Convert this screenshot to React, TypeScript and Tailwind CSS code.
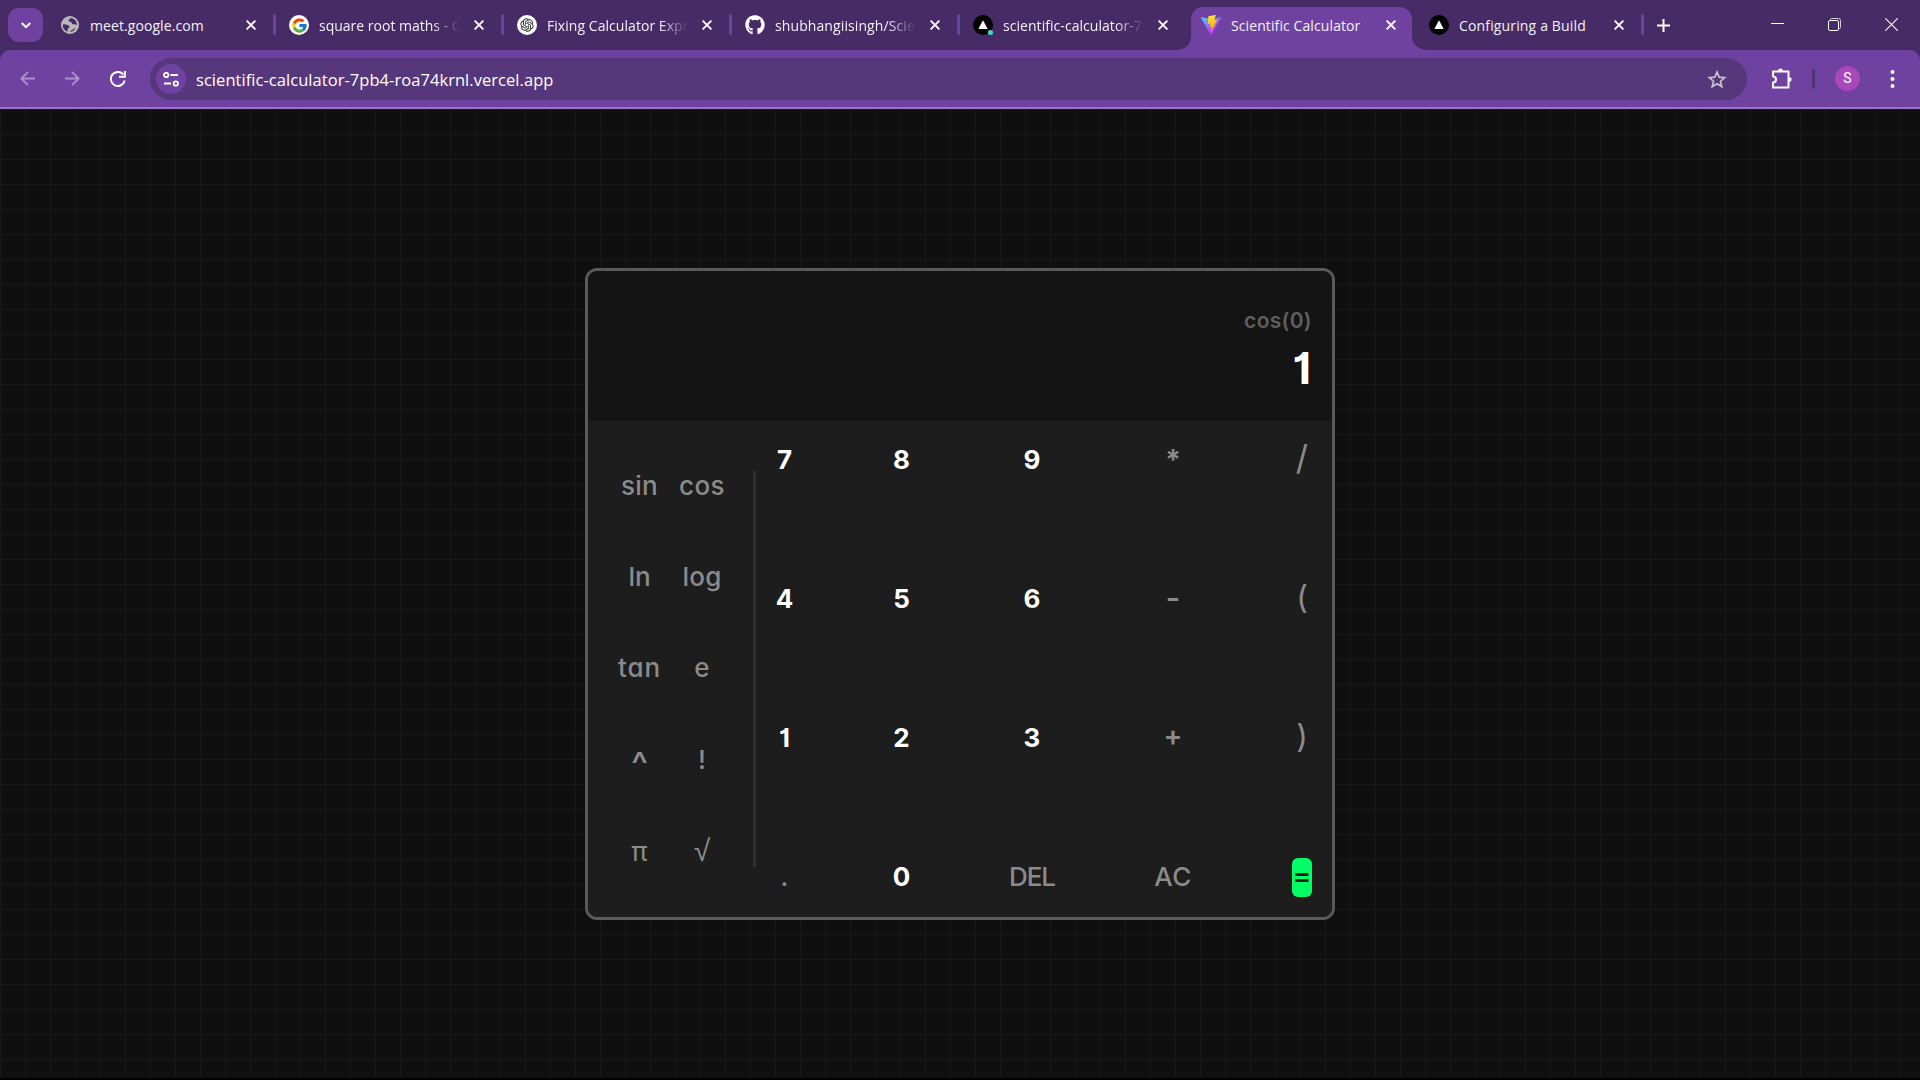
import React from "react";
import { FcGoogle } from "react-icons/fc";
import { RiOpenaiFill } from "react-icons/ri";
import { FaGithub } from "react-icons/fa";

const GlobeMark = () => (
  <svg width="18" height="18" viewBox="0 0 18 18">
    <circle cx="9" cy="9" r="9" fill="#b9b9b9" />
    <path
      d="M10.500 1.900C8.800 2.600 7.300 3.200 7.600 4.800c.3 1.300 3 .7 3.200 2.300.2 1.500 1.600 1.300 2.600 1.100 1-.2 1.900.4 2.500 1.300A7.100 7.100 0 0 0 10.500 1.900ZM2 8.200c1.500.1 3.600.2 5.200 1 1.600.8 1.500 2.300.4 2.900-1.300.7-.9 2.400-1 3.600A7.100 7.100 0 0 1 2 8.200ZM9 15.900c.2-1.500 1.800-1.300 2.600-2.200.7-.8 1.200-1.500 2.900-1.100A7 7 0 0 1 9 15.900Z"
      fill="#462b66"
    />
  </svg>
);

const GoogleMark = () => (
  <span className="flex size-5 items-center justify-center rounded-full bg-white">
    <FcGoogle size={17} />
  </span>
);

const OpenAiMark = () => (
  <span className="flex size-5 items-center justify-center rounded-full bg-white text-[#222]">
    <RiOpenaiFill size={16} />
  </span>
);

const VercelMark = ({ dot = false }: { dot?: boolean }) => (
  <svg width="20" height="20" viewBox="0 0 20 20">
    <circle cx="10" cy="10" r="10" fill="#000" />
    <path d="M10 5.2 14.7 14H5.3Z" fill="#fff" />
    {dot && <circle cx="17.5" cy="17.500" r="2.500" fill="#45dec4" />}
  </svg>
);

const ViteMark = () => (
  <svg width="20" height="20" viewBox="0 0 256 257">
    <defs>
      <linearGradient id="va" x1="-.828%" x2="57.636%" y1="7.652%" y2="78.411%">
        <stop offset="0%" stopColor="#41D1FF" />
        <stop offset="100%" stopColor="#BD34FE" />
      </linearGradient>
      <linearGradient id="vb" x1="43.376%" x2="50.316%" y1="2.242%" y2="89.03%">
        <stop offset="0%" stopColor="#FFEA83" />
        <stop offset="8.333%" stopColor="#FFDD35" />
        <stop offset="100%" stopColor="#FFA800" />
      </linearGradient>
    </defs>
    <path fill="url(#va)" d="M255.153 37.938 134.897 252.976c-2.483 4.44-8.862 4.466-11.382.048L.875 37.958c-2.746-4.814 1.371-10.646 6.827-9.67l120.385 21.517a6.537 6.537 0 0 0 2.322-.004l117.867-21.483c5.438-.991 9.574 4.796 6.877 9.62Z" />
    <path fill="url(#vb)" d="M185.432.063 96.44 17.501a3.268 3.268 0 0 0-2.634 3.014l-5.474 92.456a3.268 3.268 0 0 0 3.997 3.378l24.777-5.718c2.318-.535 4.413 1.507 3.936 3.838l-7.361 36.047c-.495 2.426 1.782 4.5 4.151 3.78l15.304-4.649c2.372-.72 4.652 1.36 4.15 3.788l-11.698 56.621c-.732 3.542 3.979 5.473 5.943 2.437l1.313-2.028 72.516-144.72c1.215-2.423-.88-5.186-3.54-4.672l-25.505 4.922c-2.396.462-4.435-1.77-3.759-4.114l16.646-57.705c.677-2.35-1.37-4.583-3.769-4.113Z" />
  </svg>
);

const tabs = [
  { title: "meet.google.com", cls: "tracking-[0.080px] -left-px", icon: <GlobeMark /> },
  { title: "square root maths - G", cls: "tracking-[0px]", icon: <GoogleMark /> },
  { title: "Fixing Calculator Expr", cls: "tracking-[0.050px]", icon: <OpenAiMark /> },
  { title: "shubhangiisingh/Scie", cls: "tracking-[0.100px]", icon: <FaGithub size={20} color="#fff" /> },
  { title: "scientific-calculator-7", cls: "tracking-[0.050px]", icon: <VercelMark dot /> },
  { title: "Scientific Calculator", cls: "tracking-[0.100px]", icon: <ViteMark />, active: true },
  { title: "Configuring a Build", cls: "tracking-[0.150px]", icon: <VercelMark /> },
];

const Cross = () => (
  <svg width="10" height="10" viewBox="0 0 10 10" stroke="#fff" strokeWidth="1.9">
    <path d="M.6.6l8.8 8.8M9.4.6.6 9.4" />
  </svg>
);

function TabStrip() {
  return (
    <div className="flex h-[50px] items-stretch bg-[#462b66]">
      <div className="mt-2 ml-2 flex h-[34px] w-[35px] items-center justify-center rounded-[11px] bg-[#6f42a1]">
        <svg width="10" height="7" viewBox="0 0 10 7" fill="none" stroke="#fff" strokeWidth="2">
          <path d="M.7 1 5 5.2 9.3 1" />
        </svg>
      </div>
      <div className="ml-[5px] flex">
        {tabs.map((t, i) => (
          <div key={t.title} className="relative flex w-[228px] shrink-0 items-center pl-[13px]">
            {t.active && (
              <svg className="absolute top-[7px] left-[-12px]" width="252" height="43" viewBox="0 0 252 43">
                <path d="M0 43c10 0 15-6 15-14V13C15 5 20 0 28 0H223c8 0 13 5 13 13V29c0 8 6 14 16 14Z" fill="#6f42a1" />
              </svg>
            )}
            <span className="relative flex w-5 items-center">{t.icon}</span>
            <span
              className={`relative mt-0.5 ml-[10px] w-[144px] text-[14px] leading-6 whitespace-nowrap text-[#f4f0f8] ${t.cls} ${i > 0 && i < 5 ? "[mask-image:linear-gradient(to_right,#000_78%,transparent_98%)]" : ""}`}
            >
              {t.title}
            </span>
            <span className="relative ml-[11px]">
              <Cross />
            </span>
            {i !== 4 && i !== 5 && <span className="absolute top-[14px] right-0 h-[21px] w-[3px] rounded-full bg-[#6f42a1]" />}
          </div>
        ))}
      </div>
      <div className="ml-[13px] flex items-center">
        <svg width="13" height="13" viewBox="0 0 13 13" stroke="#fff" strokeWidth="2">
          <path d="M6.5 0v13M0 6.5h13" />
        </svg>
      </div>
      <div className="mr-[22px] ml-auto flex items-center gap-[44px] pb-0.5">
        <svg width="13" height="13" viewBox="0 0 13 13" stroke="#fff">
          <path d="M0 5.5h13" />
        </svg>
        <svg width="13" height="13" viewBox="0 0 13 13" fill="none" stroke="#fff">
          <rect x=".5" y="2.5" width="10" height="10" rx="1.5" />
          <path d="M2.5 2V1.5q0-1 1-1H10.500q2 0 2 2V9.500q0 1-1 1H11" stroke="#d5cbe0" />
        </svg>
        <svg width="13" height="13" viewBox="0 0 13 13" stroke="#fff" strokeWidth="1.1">
          <path d="M.3.3l12.400 12.400M12.700.3.3 12.700" />
        </svg>
      </div>
    </div>
  );
}

function Toolbar() {
  return (
    <div className="bg-[#462b66]">
      <div className="flex h-[59px] items-center rounded-t-[10px] border-b-2 border-[#9a71c6] bg-[#6f42a1] text-white">
        <svg className="ml-5" width="15" height="15" viewBox="0 0 15 15" fill="none" stroke="#ad91cb" strokeWidth="1.800">
          <path d="M15 7.500H1.500M8 .8 1.300 7.500 8 14.200" />
        </svg>
        <svg className="ml-[30px]" width="15" height="15" viewBox="0 0 15 15" fill="none" stroke="#ad91cb" strokeWidth="1.800">
          <path d="M0 7.500h13.500M7 .8l6.700 6.700L7 14.200" />
        </svg>
        <svg className="ml-[30px]" width="16" height="16" viewBox="0 0 16 16" fill="none" stroke="#fff" strokeWidth="2">
          <path d="M13.200 3.400A7 7 0 1 0 14.700 9.500M14.900 0V5.800H9" />
        </svg>
        <div className="mt-px ml-6 flex h-[42px] w-[1597px] items-center rounded-full bg-[#57377b]">
          <span className="ml-1.5 flex size-[30px] items-center justify-center rounded-full bg-[#6f42a1]">
            <svg width="16" height="15" viewBox="0 0 16 15" fill="none" stroke="#fff" strokeWidth="1.800">
              <circle cx="3.200" cy="3" r="2.200" />
              <path d="M7.500 3H15M1 11.500H8" />
              <circle cx="12.800" cy="11.500" r="2.200" />
            </svg>
          </span>
          <span className="mt-[3px] ml-[10px] text-[16.500px] tracking-[0.050px] whitespace-nowrap">scientific-calculator-7pb4-roa74krnl.vercel.app</span>
          <svg className="mr-5 ml-auto" width="20" height="19" viewBox="0 0 20 19" fill="none" stroke="#c7c3cb" strokeWidth="1.700">
            <path d="M10 2l2.200 5.100 5.500.5-4.200 3.600 1.300 5.400L10 13.700l-4.800 2.900 1.300-5.400L2.300 7.600l5.500-.5Z" />
          </svg>
        </div>
        <svg className="ml-6" width="21" height="21" viewBox="0 0 21 21" fill="none" stroke="#fff" strokeWidth="2">
          <path d="M2 3.500H17.500V19.500H2V14.500a3 3 0 0 0 0-6Z" strokeLinejoin="round" />
          <path d="M7 3a2.500 2.500 0 0 1 5 0ZM18.200 9a2.500 2.500 0 0 1 0 5Z" fill="#fff" stroke="none" />
        </svg>
        <span className="ml-5 h-5 w-[3px] rounded-full bg-[#51327a]" />
        <span className="ml-5 flex size-[25px] items-center justify-center rounded-full bg-[#ab47bc] font-['Roboto',sans-serif] text-[14px]">S</span>
        <svg className="ml-[30px]" width="5" height="18" viewBox="0 0 5 18" fill="#fff">
          <circle cx="2.500" cy="2" r="2" />
          <circle cx="2.500" cy="9" r="2" />
          <circle cx="2.500" cy="16" r="2" />
        </svg>
      </div>
    </div>
  );
}

const functions = [
  ["sin", "cos"],
  ["ln", "log"],
  ["tan", "e"],
  ["^", "!"],
  ["π", "√"],
];

const rows = [
  ["7", "8", "9", "*", "/"],
  ["4", "5", "6", "-", "("],
  ["1", "2", "3", "+", ")"],
  [".", "0", "DEL", "AC", "="],
];

const columns = ["w-[17px]", "ml-[80px] w-[57px]", "ml-[80px] w-[44px]", "ml-[100px] w-[38px]", "ml-[100px] w-5"];

const functionStyles: Record<string, string> = {
  sin: "tracking-[0.300px]",
  cos: "tracking-[0.400px]",
  log: "tracking-[0.200px]",
  tan: "tracking-[0.900px]",
  "^": "text-[36px] pt-1.5",
  "!": "pt-px",
  "π": "text-[27px] pt-px font-normal",
  "√": "font-['Liberation_Sans',sans-serif] text-[30px] font-normal",
};

const keyStyles: Record<string, string> = {
  "=": "rounded-[6px] bg-[#00ff66] pb-1 text-[29px] text-[#1d1d1d]",
  "*": "text-[28px] font-bold text-[#8b8b8b]",
  "/": "text-[34px] font-normal text-[#8b8b8b] pb-1.5",
  "(": "text-[32px] font-normal text-[#8b8b8b] pb-1",
  ")": "text-[32px] font-normal text-[#8b8b8b] pb-1",
  "-": "text-[32px] text-[#8b8b8b] pb-1",
  "+": "text-[28px] font-semibold text-[#8b8b8b] pb-1",
  DEL: "tracking-[-1.100px] text-[#8b8b8b] pb-0.5",
  AC: "text-[#8b8b8b] pb-0.5 tracking-[0.500px]",
  ".": "text-[#8b8b8b] pb-0.5",
};

function Calculator() {
  return (
    <div className="w-[750px] overflow-hidden rounded-xl border-[3px] border-[#5a5a5a] font-['Inter',sans-serif] [font-feature-settings:'cv11','cv01']">
      <div className="flex h-[150px] flex-col items-end bg-[#141414] pt-[31px] pr-5">
        <div className="h-[38px] text-[21px] leading-[38px] font-semibold tracking-[0.300px] text-[#5f5f5f]">cos(0)</div>
        <div className="h-[57px] pr-px text-[44px] leading-[57px] font-bold text-white">1</div>
      </div>
      <div className="flex h-[496px] bg-[#1d1d1d] text-[26px] leading-[39px] font-medium">
        <div className="mt-[45px] ml-5 flex h-[404px] flex-col justify-between">
          {functions.map((pair) => (
            <div key={pair[0]} className="flex h-[39px] leading-[39px] text-[#8b8b8b]">
              {pair.map((name, i) => (
                <span key={name} className={`text-center ${i === 0 ? "w-[63px]" : "w-[62px]"} ${functionStyles[name] ?? ""}`}>
                  {name}
                </span>
              ))}
            </div>
          ))}
        </div>
        <div className="mt-[50px] ml-5 h-[396px] w-[3px] bg-[#303030]" />
        <div className="my-5 ml-5 flex flex-1 flex-col justify-between">
          {rows.map((row) => (
            <div key={row[0]} className="flex">
              {row.map((k, i) => (
                <span
                  key={k}
                  className={`flex h-[39px] shrink-0 items-center justify-center ${columns[i]} ${keyStyles[k] ?? "pb-0.5 font-bold text-white"}`}
                >
                  {k}
                </span>
              ))}
            </div>
          ))}
        </div>
      </div>
    </div>
  );
}

export default function App() {
  return (
    <div className="flex h-[1080px] w-[1920px] flex-col overflow-hidden bg-black font-['Open_Sans',sans-serif]">
      <TabStrip />
      <Toolbar />
      <div className="flex h-[969px] items-center justify-center bg-[#0f0f0f] bg-[linear-gradient(to_right,#191919_1px,transparent_1px),linear-gradient(to_bottom,#191919_1px,transparent_1px)] bg-size-[25px_25px]">
        <Calculator />
      </div>
    </div>
  );
}
